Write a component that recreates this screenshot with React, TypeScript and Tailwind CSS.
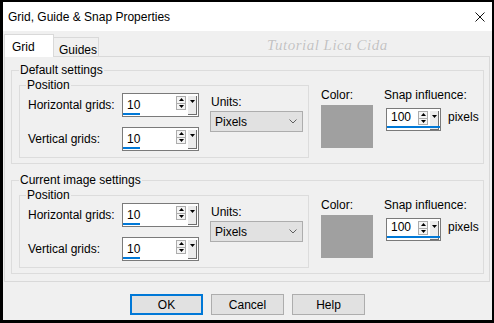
import React from 'react';

const font = "font-['Liberation_Sans',Arial,sans-serif]";

function Tri({ down = false }: { down?: boolean }) {
  return (
    <svg width="5" height="3" viewBox="0 0 5 3" className="block">
      <polygon points={down ? '0,0 5,0 2.5,3' : '0,3 5,3 2.5,0'} fill="#000" />
    </svg>
  );
}

function SpinEdit({
  value,
  width,
  height,
  textTop,
  barWidth,
  barBottom,
}: {
  value: string;
  width: string;
  height: string;
  textTop: string;
  barWidth: string;
  barBottom: string;
}) {
  return (
    <div className={`relative flex border border-[#7a7a7a] bg-white ${width} ${height}`}>
      <span className={`flex-1 pl-[4px] leading-[14px] ${textTop}`}>{value}</span>
      <div className="flex gap-[2px] pt-[2px] pr-[1px]">
        <div className="flex h-[14px] w-[10px] flex-col border border-[#acacac] bg-[#f4f4f4]">
          <div className="flex flex-1 items-center justify-center border-b border-[#acacac]">
            <Tri />
          </div>
          <div className="flex flex-1 items-center justify-center">
            <Tri down />
          </div>
        </div>
        <div className="flex h-[19px] w-[9px] justify-center border-r border-b border-[#6d6d6d] bg-[#ececec] pt-[4px]">
          <Tri down />
        </div>
      </div>
      <div className={`absolute left-0 h-[2px] bg-[#0078d7] ${barWidth} ${barBottom}`} />
    </div>
  );
}

function Section({ title }: { title: string }) {
  return (
    <fieldset className="w-[473px] border border-[#dcdcdc]">
      <legend className="ml-[7px] px-[1px] leading-[14px]">{title}</legend>
      <div className="flex pt-[1px] pb-[5px] pl-[7px]">
        <fieldset className="h-[80px] w-[290px] border border-[#dcdcdc]">
          <legend className="ml-[6px] px-[1px] leading-[14px]">Position</legend>
          <div className="flex pl-[8px] pt-[1px]">
            <div className="flex flex-col gap-[10px]">
              <div className="flex items-center">
                <span className="w-[94px]">Horizontal grids:</span>
                <SpinEdit
                  value="10"
                  width="w-[77px]"
                  height="h-[24px]"
                  textTop="pt-[4px]"
                  barWidth="w-[17px]"
                  barBottom="bottom-[1px]"
                />
              </div>
              <div className="flex items-center">
                <span className="w-[94px]">Vertical grids:</span>
                <SpinEdit
                  value="10"
                  width="w-[77px]"
                  height="h-[24px]"
                  textTop="pt-[4px]"
                  barWidth="w-[17px]"
                  barBottom="bottom-[1px]"
                />
              </div>
            </div>
            <div className="ml-[11px] flex flex-col pt-[2px]">
              <span className="pl-[1px] leading-[14px]">Units:</span>
              <div className="mt-[2px] flex h-[21px] w-[93px] items-center justify-between border border-[#adadad] bg-[#e1e1e1] pl-[4px] pr-[5px]">
                <span>Pixels</span>
                <svg width="8" height="5" viewBox="0 0 8 5">
                  <polyline points="0.5,0.5 4,4 7.5,0.5" fill="none" stroke="#606060" strokeWidth="1" />
                </svg>
              </div>
            </div>
          </div>
        </fieldset>
        <div className="ml-[12px] flex flex-col pt-[10px]">
          <span className="leading-[14px]">Color:</span>
          <div className="mt-[3px] h-[43px] w-[52px] bg-[#a0a0a0]" />
        </div>
        <div className="ml-[11px] flex flex-col pt-[10px]">
          <span className="leading-[14px]">Snap influence:</span>
          <div className="mt-[6px] ml-[2px] flex items-center">
            <SpinEdit
              value="100"
              width="w-[55px]"
              height="h-[23px]"
              textTop="pt-[1px]"
              barWidth="w-full"
              barBottom="bottom-[2px]"
            />
            <span className="ml-[7px] -mt-[6px]">pixels</span>
          </div>
        </div>
      </div>
    </fieldset>
  );
}

export default function App() {
  return (
    <div className={`h-[323px] w-[494px] bg-black pt-[2px] pl-[3px] pr-[2px] pb-[3px] text-[12px] text-black ${font}`}>
      <div className="flex h-full flex-col bg-[#f0f0f0]">
        {/* title bar */}
        <div className="flex h-[29px] items-center justify-between bg-white pl-[5px] pr-[7px]">
          <span className="text-[12px]">Grid, Guide &amp; Snap Properties</span>
          <svg width="10" height="10" viewBox="0 0 10 10">
            <path d="M0.5 0.5 L9.5 9.5 M9.5 0.5 L0.5 9.5" stroke="#111" strokeWidth="1" />
          </svg>
        </div>

        {/* tabs */}
        <div className="flex h-[25px] items-end pl-[1px]">
          <div className="relative z-10 -mb-px h-[23px] w-[50px] border border-b-0 border-[#d9d9d9] bg-white pl-[7px] pt-[3px]">
            Grid
          </div>
          <div className="h-[19px] w-[45px] border-t border-r border-[#d9d9d9] pl-[5px] pt-[3px]">
            Guides
          </div>
          <span className="ml-[168px] self-center pt-[3px] font-['Liberation_Serif',serif] text-[15px] italic tracking-[0.5px] text-[#c2c2c2] [text-shadow:0_0_1px_#fff]">
            Tutorial Lica Cida
          </span>
        </div>

        {/* tab page */}
        <div className="ml-[1px] flex h-[226px] w-[486px] flex-col gap-[9px] border border-[#d9d9d9] pt-[6px] pl-[6px]">
          <Section title="Default settings" />
          <Section title="Current image settings" />
        </div>

        {/* buttons */}
        <div className="flex justify-center gap-[8px] pt-[12px]">
          <button className="h-[21px] w-[73px] border-2 border-[#0078d7] bg-[#e1e1e1]">OK</button>
          <button className="h-[21px] w-[73px] border border-[#adadad] bg-[#e1e1e1]">Cancel</button>
          <button className="h-[21px] w-[73px] border border-[#adadad] bg-[#e1e1e1]">Help</button>
        </div>
      </div>
    </div>
  );
}
